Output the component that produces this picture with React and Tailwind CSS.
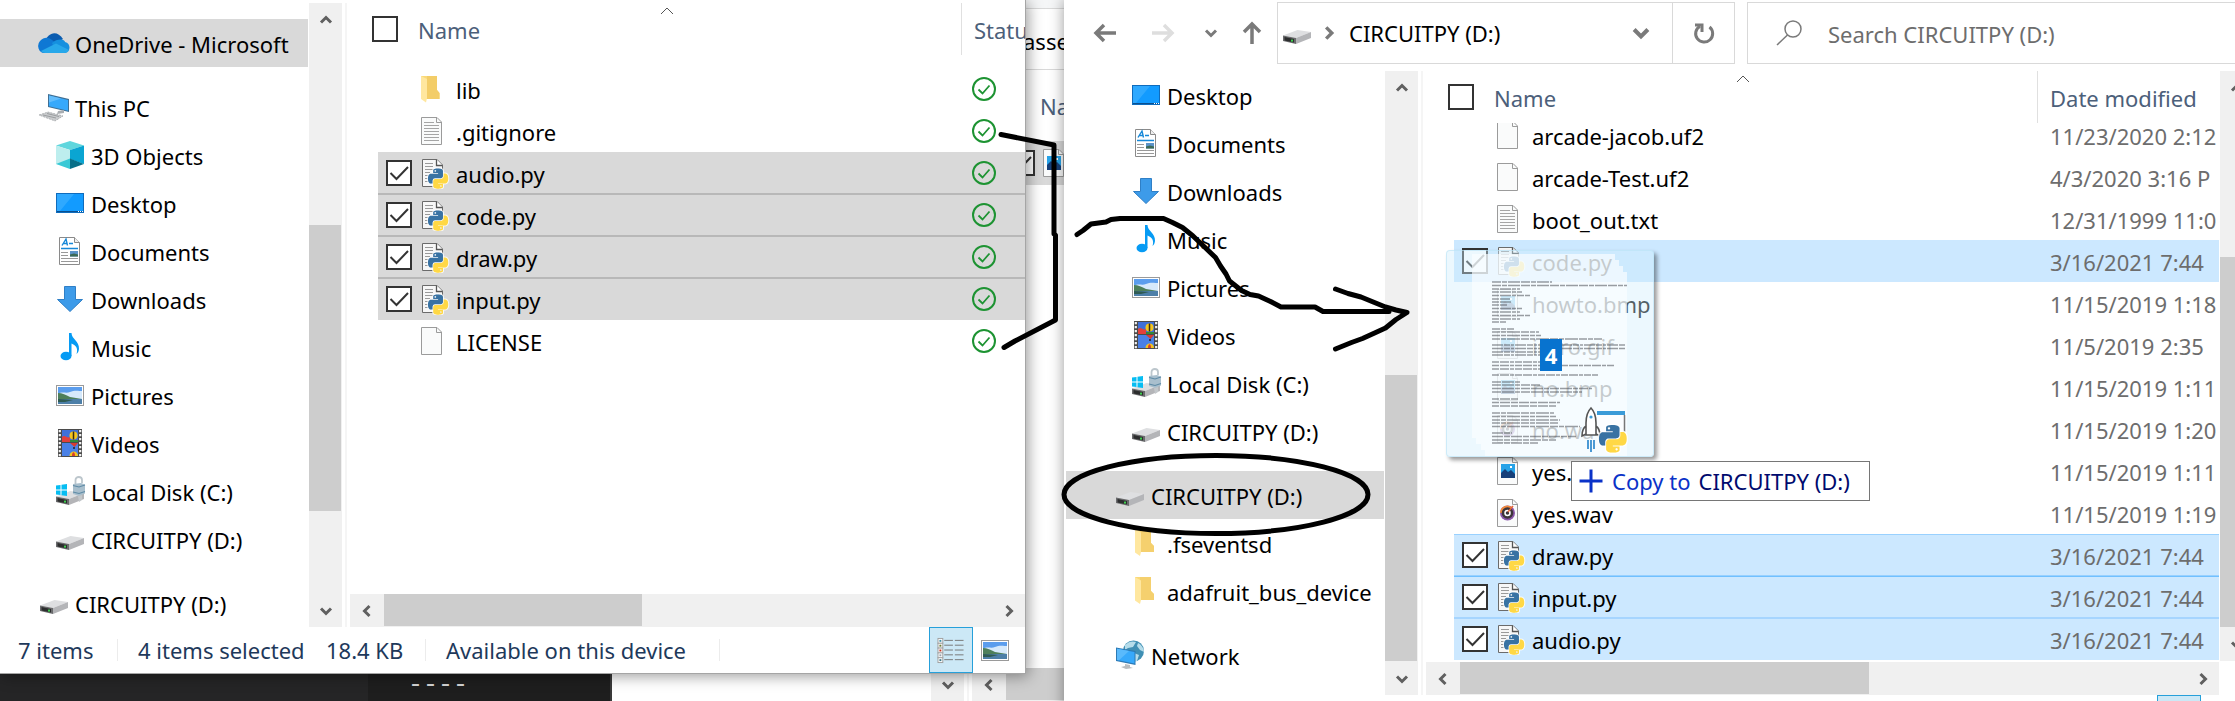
import React from "react";

/* ---------- icons ---------- */

const PY_TOP =
  "M14.25.18l.9.2.73.26.59.3.45.32.34.34.25.34.16.33.1.3.04.26.02.2-.01.13V8.5l-.05.63-.13.55-.21.46-.26.38-.3.31-.33.25-.35.19-.35.14-.33.1-.3.07-.26.04-.21.02H8.77l-.69.05-.59.14-.5.22-.41.27-.33.32-.27.35-.2.36-.15.37-.1.35-.07.32-.04.27-.02.21v3.06H3.17l-.21-.03-.28-.07-.32-.12-.35-.18-.36-.26-.36-.36-.35-.46-.32-.59-.28-.73-.21-.88-.14-1.05-.05-1.23.06-1.22.16-1.04.24-.87.32-.71.36-.57.4-.44.42-.33.42-.24.4-.16.36-.1.32-.05.24-.01h.16l.06.01h8.16v-.83H6.18l-.01-2.75-.02-.37.05-.34.11-.31.17-.28.25-.26.31-.23.38-.2.44-.18.51-.15.58-.12.64-.1.71-.06.77-.04.84-.02 1.27.05zm-6.3 1.98l-.23.33-.08.41.08.41.23.34.33.22.41.09.41-.09.33-.22.23-.34.08-.41-.08-.41-.23-.33-.33-.22-.41-.09-.41.09z";
const PY_BOTTOM =
  "M21.04 6.11l.28.06.32.12.35.18.36.27.36.35.35.47.32.59.28.73.21.88.14 1.04.05 1.23-.06 1.23-.16 1.04-.24.86-.32.71-.36.57-.4.45-.42.33-.42.24-.4.16-.36.09-.32.05-.24.02-.16-.01h-8.22v.82h5.84l.01 2.76.02.36-.05.34-.11.31-.17.29-.25.25-.31.24-.38.2-.44.17-.51.15-.58.13-.64.09-.71.07-.77.04-.84.01-1.27-.04-1.07-.14-.9-.2-.73-.25-.59-.3-.45-.33-.34-.34-.25-.34-.16-.33-.1-.3-.04-.25-.02-.2.01-.13v-5.34l.05-.64.13-.54.21-.46.26-.38.3-.32.33-.24.35-.2.35-.14.33-.1.3-.06.26-.04.21-.02.13-.01h5.84l.69-.05.59-.14.5-.21.41-.28.33-.32.27-.35.2-.36.15-.36.1-.35.07-.32.04-.28.02-.21V6.07h2.09l.14.01zm-6.47 14.25l-.23.33-.08.41.08.41.23.33.33.23.41.08.41-.08.33-.23.23-.33.08-.41-.08-.41-.23-.33-.33-.23-.41-.08-.41.08z";

function PythonMark() {
  return (
    <g>
      <path d={PY_TOP} fill="#3872a3" stroke="#fff" strokeWidth="2.4" strokeOpacity=".8" />
      <path d={PY_BOTTOM} fill="#ffd43b" stroke="#fff" strokeWidth="2.4" strokeOpacity=".8" />
      <path d={PY_TOP} fill="#3872a3" />
      <path d={PY_BOTTOM} fill="#ffd845" />
    </g>
  );
}

function Svg({ children, className = "size-8 shrink-0" }) {
  return (
    <svg viewBox="0 0 32 32" className={className} aria-hidden="true">
      {children}
    </svg>
  );
}

function Drive({ y = 0 }) {
  return (
    <g transform={`translate(0 ${y})`}>
      <path d="M2 16.5 16.5 11 30 13 15 19z" fill="#dedfe1" />
      <path d="M15 19 30 13v6L15 25z" fill="#b4b5b8" />
      <path d="M2 16.5 15 19v6L2 22z" fill="#6a6b6d" />
      <path d="M3.5 18 13 20v3.6L3.5 21.4z" fill="#2c2d2e" />
      <rect x="10" y="20.6" width="2" height="2" fill="#3fcf4f" />
    </g>
  );
}

function Landscape({ x = 2, y = 6, w = 28, h = 21 }) {
  return (
    <svg x={x} y={y} width={w} height={h} viewBox="0 0 28 21" preserveAspectRatio="none">
      <rect x=".5" y=".5" width="27" height="20" fill="#fff" stroke="#9a9a9a" />
      <rect x="2" y="2" width="24" height="17" fill="#5b9ded" />
      <path d="M2 9c4-3 8 0 12-2s9-1 12-1v8H2z" fill="#d6e9fb" />
      <path d="M2 8c4 0 8 2 12 4 4 1 8 1 12 2v1H2z" fill="#4d7f5b" />
      <path d="M2 14h24v5H2z" fill="#4d7fa8" />
      <path d="M2 14c6 0 10 1 15 1l-8 2H2z" fill="#2f5b52" />
    </svg>
  );
}

const ICONS = {
  onedrive: (
    <Svg>
      <path d="M7 15C9 6 19 2 25 12l-8 5z" fill="#0a5cb0" />
      <path d="M6 26A6 7 0 0 1 2 14c4-4 8-4 12-1l8 6-8 7z" fill="#0f78d4" />
      <path d="M14 16c5-5 13-4 13-1 6 1 6 10 0 11H18z" fill="#1590df" />
      <path d="M3 24 18 16.500 31 23c-1 2-2 3-5 3H7c-2 0-3-1-4-2z" fill="#28a8ea" />
    </Svg>
  ),
  pc: (
    <Svg>
      <path d="M10 3v13l21 5V8z" fill="#3f6f94" />
      <path d="M11 4.400v10.800l19 4.500V9z" fill="#37a9fb" />
      <path d="M11 4.400v7l12 -4z" fill="#63bdfc" />
      <path d="M20 20l6-1v3l-7 1z" fill="#a9adb1" />
      <path d="M1 24l9-3 15 4-8 5z" fill="#c9cbcd" stroke="#9a9da0" strokeWidth=".7" strokeDasharray="2 1" />
      <path d="M5 24l13 3M9 22.500l12 3" stroke="#8d9093" strokeWidth=".8" />
    </Svg>
  ),
  objects: (
    <Svg>
      <path d="M2 6.500 16 2l14 4.500L16 11z" fill="#5fd6dd" />
      <path d="M2 6.500 16 11v15.500L2 25z" fill="#bdeeee" />
      <path d="M2 25l14-5.500V30z" fill="#39c9d6" />
      <path d="M30 6.500 16 11v9l14 5z" fill="#0aa5d2" />
      <path d="M30 25l-14-5.500V30z" fill="#086f88" />
    </Svg>
  ),
  desktop: (
    <Svg>
      <rect x="2.500" y="6.500" width="27" height="19" fill="#129bff" stroke="#0f6cbd" />
      <path d="M3 7h17L6 24H3z" fill="#2fa9ff" />
      <path d="M3 24.500h26" stroke="#0a4f8f" />
      <path d="M24 24.500h5" stroke="#fff" strokeDasharray="1 1" />
    </Svg>
  ),
  documents: (
    <Svg>
      <path d="M5.500 2.500h15l5 5v22h-20z" fill="#fff" stroke="#8a8a8a" />
      <path d="M20.500 2.500v5h5" fill="#eee" stroke="#8a8a8a" />
      <path d="M8 10.500 12 4l1.500 6.500M9.500 8.500h4" fill="none" stroke="#1688d8" strokeWidth="1.400" />
      <path d="M15 8.500h4M7 13.500h17" stroke="#1688d8" strokeWidth="1.300" />
      <path d="M7 17.500h7M7 20.500h7M7 23.500h17M7 26.500h17" stroke="#999" />
      <rect x="16" y="16" width="8" height="5.500" fill="#5b93c8" />
      <path d="M16 19.500l4-1 4 1v2h-8z" fill="#3d6a55" />
    </Svg>
  ),
  downloads: (
    <Svg>
      <path d="M10.500 3.500h11v13h7L16 28.500 3.500 16.500h7z" fill="#3d9be9" stroke="#2f7fc6" />
    </Svg>
  ),
  music: (
    <Svg>
      <ellipse cx="12" cy="25" rx="5.500" ry="4.300" fill="#069bf4" />
      <path d="M15 2h2.500c0 6 8 8 7.500 16-.3 2-1 4-2.500 5 2-6-1-9-5-10.500V25H15z" fill="#069bf4" />
    </Svg>
  ),
  pictures: (
    <Svg>
      <Landscape />
    </Svg>
  ),
  videos: (
    <Svg>
      <rect x="4" y="2" width="24" height="28" fill="#4b4b4b" />
      <path d="M5.800 3v27M26.200 3v27" stroke="#f2f2f2" strokeWidth="2.200" strokeDasharray="2.200 1.800" />
      <rect x="8" y="3" width="16" height="12" fill="#3f70d8" />
      <rect x="8" y="16" width="16" height="13" fill="#4a80e6" />
      <path d="M8 10c3-3 5 2 8 0v5H8z" fill="#e2403a" />
      <path d="M16 13h8v2h-8z" fill="#2f8a3a" />
      <circle cx="19.500" cy="8.500" r="4" fill="#f4c51e" />
      <path d="M19.500 4.500v8" stroke="#3a2a10" strokeWidth="1.500" />
      <path d="M16 16h8l-3.500 4z" fill="#d83b2e" />
      <path d="M20 20v2" stroke="#222" strokeWidth="1.500" />
      <path d="M15.500 29c0-6 8.500-6 8.500 0z" fill="#f4c51e" />
      <path d="M18 29c0-5 3-5 3 0z" fill="#d83b2e" />
    </Svg>
  ),
  disk: (
    <Svg>
      <Drive y={5} />
      <path d="M2 10.500 6.500 10v4.500H2zM7.500 9.800 13 9v5.500H7.500zM2 15.500h4.500V20L2 19.500zM7.500 15.500H13V21l-5.500-.8z" fill="#06bdf2" />
      <path d="M21.500 10V5c0-4 6.500-4 6.500 0v3" fill="none" stroke="#bcc6cc" strokeWidth="1.800" />
      <path d="M19 9l8-1 4 1.500v9L25 21l-6-2z" fill="#a9bfcd" />
      <path d="M19 10.500l6 1.500 6-2M19 17l6 1.500 6-2" fill="none" stroke="#5f8ba6" strokeWidth="1.200" />
      <path d="M24 21l4-1v5l-3 2z" fill="#c3c7ca" />
    </Svg>
  ),
  drive: (
    <Svg>
      <Drive y={2} />
    </Svg>
  ),
  folder: (
    <Svg>
      <path d="M5 2h16v14l3 3v6H5z" fill="#fad978" />
      <path d="M10 2h11v14l3 3v6H10z" fill="#f5d06e" />
      <path d="M5 2l6 3.500V25l-1 4-5-3.500z" fill="#ffe79f" />
    </Svg>
  ),
  network: (
    <Svg>
      <circle cx="19.500" cy="12" r="10.500" fill="#3f8fb4" />
      <path d="M11 6c4-4 8-4 11-3l-3 5-5 1-3 2zM24 4c4 2 6 6 6 9l-4-2-3-4zM20 14l5 2-2 6h-4z" fill="#b5dcea" />
      <path d="M2 8.500 21.500 12v14L2 22z" fill="#2d7ab5" />
      <path d="M3 9.800 20.500 13v11.500L3 21z" fill="#37a9fb" />
      <path d="M3 9.800 15 12 5 21.300 3 21z" fill="#5abafc" />
      <path d="M11 25l5 1v2l3 1-7 1-5-2 4-1z" fill="#b9bdc0" />
    </Svg>
  ),
};

function Page({ stroke = "#9b9b9b", children }) {
  return (
    <Svg>
      <path d="M.500 2.500h15.500l4.500 4.500v22.500h-20z" fill="#fafbfb" stroke={stroke} />
      <path d="M15.500 2.500v5h5" fill="none" stroke={stroke} />
      {children}
    </Svg>
  );
}

const FILE_ICONS = {
  folder: (
    <Svg>
      <path d="M0 3h16v14l2.500 3v6H0z" fill="#fad978" />
      <path d="M6 3h10v14l2.500 3v6H6z" fill="#f3cd68" />
      <path d="M0 3l6 3v19l-1 4.500L0 26z" fill="#ffe79f" />
    </Svg>
  ),
  text: (
    <Page>
      <path d="M3 7.500h10M3 10.500h15M3 13.500h15M3 16.500h15M3 19.500h15M3 22.500h15M3 25.500h15" stroke="#a5a5a5" />
    </Page>
  ),
  blank: <Page />,
  image: (
    <Page>
      <rect x="4" y="9" width="14" height="14" fill="#27a3e8" />
      <path d="M4 18l4-4 3 3 3-2 4 4v4H4z" fill="#17407a" />
      <rect x="13" y="11" width="2" height="2" fill="#fff" />
    </Page>
  ),
  audio: (
    <Page>
      <circle cx="10.500" cy="16" r="7.500" fill="#8a55a8" />
      <path d="M3 16a7.500 7.500 0 0 1 12-6l-4.500 6z" fill="#f0893a" />
      <circle cx="10.500" cy="16" r="5.800" fill="#3c3438" />
      <circle cx="10.500" cy="16" r="2.500" fill="none" stroke="#fff" strokeWidth="1.500" />
      <path d="M11 15l5-6" stroke="#e8643a" strokeWidth="1.500" />
    </Page>
  ),
  python: (
    <Svg>
      <path d="M1.500 2.500h14.500l5.500 5.500v21.500h-20z" fill="#f7f7f7" stroke="#6b6b6b" />
      <path d="M15.500 2.500v6h6" fill="#fff" stroke="#555" strokeWidth="1.300" />
      <path d="M4 6.500h8M4 9.500h4M4 9.500h8M4 12.500h9M4 15.500h5M4 18.500h3M4 21.500h3M4 24.500h4" stroke="#9a9a9a" />
      <g transform="translate(7 11.500) scale(.84)">
        <PythonMark />
      </g>
    </Svg>
  ),
};

const CHEVRONS = {
  up: "M3 10.500 8 5.500l5 5",
  down: "M3 5.500l5 5 5-5",
  left: "M10.500 3l-5 5 5 5",
  right: "M5.500 3l5 5-5 5",
};

function Chevron({ dir, className }) {
  return (
    <svg viewBox="0 0 16 16" className={className} fill="none" stroke="currentColor" strokeWidth="3" aria-hidden="true">
      <path d={CHEVRONS[dir]} />
    </svg>
  );
}

/* ---------- scroll bars ---------- */

function ScrollButton({ dir }) {
  return (
    <button type="button" aria-label={`Scroll ${dir}`} className="grid size-[33px] shrink-0 place-items-center text-[#606060]">
      <Chevron dir={dir} className="size-4" />
    </button>
  );
}

function VScroll({ before, thumb, after }) {
  return (
    <div className="flex w-[33px] shrink-0 flex-col bg-[#f0f0f0]">
      <ScrollButton dir="up" />
      <div className={`basis-0 ${before}`} />
      <div className={`mr-px basis-0 bg-[#cdcdcd] ${thumb}`} />
      <div className={`basis-0 ${after}`} />
      <ScrollButton dir="down" />
    </div>
  );
}

function HScroll({ thumb, after }) {
  return (
    <div className="flex h-[33px] shrink-0 bg-[#f0f0f0]">
      <ScrollButton dir="left" />
      <div className={`ml-px mb-px basis-0 bg-[#cdcdcd] ${thumb}`} />
      <div className={`basis-0 ${after}`} />
      <ScrollButton dir="right" />
    </div>
  );
}

/* ---------- navigation pane ---------- */

function NavRow({ icon, label, indent, active }) {
  return (
    <a
      href="#"
      className={`flex h-12 items-center gap-[5px] overflow-hidden whitespace-nowrap ${indent} ${active ? "bg-[#d9d9d9]" : ""}`}
    >
      {ICONS[icon]}
      <span className="pt-px">{label}</span>
    </a>
  );
}

const LEFT_NAV = [
  [{ icon: "onedrive", label: "OneDrive - Microsoft", indent: "pl-[38px]", active: true }],
  [
    { icon: "pc", label: "This PC", indent: "pl-[38px]" },
    { icon: "objects", label: "3D Objects", indent: "pl-[54px]" },
    { icon: "desktop", label: "Desktop", indent: "pl-[54px]" },
    { icon: "documents", label: "Documents", indent: "pl-[54px]" },
    { icon: "downloads", label: "Downloads", indent: "pl-[54px]" },
    { icon: "music", label: "Music", indent: "pl-[54px]" },
    { icon: "pictures", label: "Pictures", indent: "pl-[54px]" },
    { icon: "videos", label: "Videos", indent: "pl-[54px]" },
    { icon: "disk", label: "Local Disk (C:)", indent: "pl-[54px]" },
    { icon: "drive", label: "CIRCUITPY (D:)", indent: "pl-[54px]" },
  ],
  [{ icon: "drive", label: "CIRCUITPY (D:)", indent: "pl-[38px]" }],
];

const RIGHT_NAV = [
  [
    { icon: "desktop", label: "Desktop", indent: "pl-16" },
    { icon: "documents", label: "Documents", indent: "pl-16" },
    { icon: "downloads", label: "Downloads", indent: "pl-16" },
    { icon: "music", label: "Music", indent: "pl-16" },
    { icon: "pictures", label: "Pictures", indent: "pl-16" },
    { icon: "videos", label: "Videos", indent: "pl-16" },
    { icon: "disk", label: "Local Disk (C:)", indent: "pl-16" },
    { icon: "drive", label: "CIRCUITPY (D:)", indent: "pl-16" },
  ],
  [
    { icon: "drive", label: "CIRCUITPY (D:)", indent: "pl-12", active: true },
    { icon: "folder", label: ".fseventsd", indent: "pl-16" },
    { icon: "folder", label: "adafruit_bus_device", indent: "pl-16" },
  ],
  [{ icon: "network", label: "Network", indent: "pl-12" }],
];

function NavPane({ groups, className }) {
  return (
    <nav className={`flex shrink-0 flex-col gap-4 overflow-hidden ${className}`}>
      {groups.map((rows, i) => (
        <div key={i}>
          {rows.map((row, j) => (
            <NavRow key={j} {...row} />
          ))}
        </div>
      ))}
    </nav>
  );
}

/* ---------- file list ---------- */

function Checkbox({ label, checked = false }) {
  return (
    <span className="grid size-[26px] shrink-0">
      <input
        type="checkbox"
        aria-label={label}
        defaultChecked={checked}
        className="peer col-start-1 row-start-1 size-[26px] appearance-none border-2 border-[#333] bg-white"
      />
      <svg
        viewBox="0 0 26 26"
        className="pointer-events-none invisible col-start-1 row-start-1 size-[26px] peer-checked:visible"
        fill="none"
        stroke="#333"
        strokeWidth="2"
        aria-hidden="true"
      >
        <path d="M4.500 13l6 6L22 7" />
      </svg>
    </span>
  );
}

function Synced() {
  return (
    <svg viewBox="0 0 24 24" className="size-6 shrink-0" fill="none" stroke="#1d9332" role="img" aria-label="Available on this device">
      <circle cx="12" cy="12" r="11" strokeWidth="2" />
      <path d="M6.500 12.500l4 4 7-8" strokeWidth="1.800" />
    </svg>
  );
}

function FileTable({ column, columnPad, headClass, files }) {
  return (
    <table className="w-full table-fixed border-collapse text-left">
      <colgroup>
        <col className="w-[612px]" />
        <col />
      </colgroup>
      <thead>
        <tr className="text-[#4c607a]">
          <th className={`p-0 align-top font-normal ${headClass}`}>
            <div className="flex h-[52px] items-center border-r border-[#e0e0e0] pl-[22px]">
              <Checkbox label="Select all" />
              <span className="w-[262px] pt-px pl-5">Name</span>
              <svg viewBox="0 0 14 8" className="mb-9 h-2 w-[14px]" fill="none" stroke="#555" aria-hidden="true">
                <path d="M1 7l6-6 6 6" />
              </svg>
            </div>
          </th>
          <th className="overflow-hidden p-0 align-top font-normal whitespace-nowrap">
            <div className="flex h-[52px] items-center pt-px pl-3">{column}</div>
          </th>
        </tr>
      </thead>
      <tbody>
        {files.map((f) => (
          <tr key={f.name}>
            <td className="p-0 pl-7">
              <div className={f.clipped ? "flex h-[33px] items-end overflow-hidden" : ""}>
                <div className={`flex h-[42px] items-center border-y pl-2 ${f.tone || "border-transparent"}`}>
                  {f.checked ? <Checkbox label={f.name} checked /> : <span className="w-[26px]" />}
                  <span className="flex items-center gap-[3px] pl-[9px] whitespace-nowrap">
                    {FILE_ICONS[f.icon]}
                    <span className="pt-[2px]">{f.name}</span>
                  </span>
                </div>
              </div>
            </td>
            <td className="overflow-hidden p-0 whitespace-nowrap text-[#6d6d6d]">
              <div className={f.clipped ? "flex h-[33px] items-end overflow-hidden" : ""}>
                <div className={`flex h-[42px] items-center border-y ${columnPad} ${f.tone || "border-transparent"}`}>
                  {f.date ? <span className="pt-[2px]">{f.date}</span> : <Synced />}
                </div>
              </div>
            </td>
          </tr>
        ))}
      </tbody>
    </table>
  );
}

const GREY_FIRST = "bg-[#d9d9d9] border-t-transparent border-b-[#b8b8b8]";
const GREY = "bg-[#d9d9d9] border-[#b8b8b8]";
const GREY_LAST = "bg-[#d9d9d9] border-t-[#b8b8b8] border-b-transparent";
const BLUE = "bg-[#cce8ff] border-transparent";
const BLUE_FIRST = "bg-[#cce8ff] border-t-[#99d1ff] border-b-[#99d1ff]";
const BLUE_MID = "bg-[#cce8ff] border-t-[#70c0ff] border-b-[#a6d5ff]";
const BLUE_LAST = "bg-[#cce8ff] border-t-[#a6d5ff] border-b-transparent";

const LEFT_FILES = [
  { name: "lib", icon: "folder" },
  { name: ".gitignore", icon: "text" },
  { name: "audio.py", icon: "python", checked: true, tone: GREY_FIRST },
  { name: "code.py", icon: "python", checked: true, tone: GREY },
  { name: "draw.py", icon: "python", checked: true, tone: GREY },
  { name: "input.py", icon: "python", checked: true, tone: GREY_LAST },
  { name: "LICENSE", icon: "blank" },
];

const RIGHT_FILES = [
  { name: "arcade-jacob.uf2", icon: "blank", date: "11/23/2020 2:12", clipped: true },
  { name: "arcade-Test.uf2", icon: "blank", date: "4/3/2020 3:16 P" },
  { name: "boot_out.txt", icon: "text", date: "12/31/1999 11:0" },
  { name: "code.py", icon: "python", date: "3/16/2021 7:44", checked: true, tone: BLUE },
  { name: "howto.bmp", icon: "image", date: "11/15/2019 1:18" },
  { name: "intro.gif", icon: "image", date: "11/5/2019 2:35" },
  { name: "no.bmp", icon: "image", date: "11/15/2019 1:11" },
  { name: "no.wav", icon: "audio", date: "11/15/2019 1:20" },
  { name: "yes.bmp", icon: "image", date: "11/15/2019 1:11" },
  { name: "yes.wav", icon: "audio", date: "11/15/2019 1:19" },
  { name: "draw.py", icon: "python", date: "3/16/2021 7:44", checked: true, tone: BLUE_FIRST },
  { name: "input.py", icon: "python", date: "3/16/2021 7:44", checked: true, tone: BLUE_MID },
  { name: "audio.py", icon: "python", date: "3/16/2021 7:44", checked: true, tone: BLUE_LAST },
];

function ViewButtons() {
  return (
    <div className="ml-auto flex h-[46px] pr-2">
      <button type="button" aria-label="Details view" className="grid w-11 place-items-center border border-[#26a0da] bg-[#cce8f6]">
        <svg viewBox="0 0 28 28" className="size-7 pt-px" aria-hidden="true">
          {[0, 1, 2, 3, 4].map((i) => (
            <g key={i} transform={`translate(0 ${1 + i * 5})`}>
              <rect x=".500" y=".500" width="5" height="5" fill="#fff" stroke="#a0a0a0" />
              <rect x="2" y="2" width="2" height="2" fill={["#3f8fa8", "#6b7a34", "#c8301f", "#9aa3ad", "#3f7a8a"][i]} />
              <path d="M7 2.500h9M18 2.500h9" stroke="#777" />
            </g>
          ))}
        </svg>
      </button>
      <button type="button" aria-label="Large icons view" className="grid w-11 place-items-center">
        <Svg>
          <Landscape />
        </Svg>
      </button>
    </div>
  );
}

/* ---------- windows ---------- */

function SourceWindow() {
  return (
    <section className="absolute top-0 bottom-[27px] left-0 flex w-[1026px] flex-col border-r border-b border-[#a5a5a5] bg-white shadow-[2px_2px_14px_rgba(0,0,0,0.4)]">
      <div className="flex min-h-0 flex-1 pt-[3px]">
        <NavPane groups={LEFT_NAV} className="w-[308px] pt-4" />
        <div className="flex pl-px">
          <VScroll before="grow-[189]" thumb="grow-[286]" after="grow-[83]" />
        </div>
        <div className="ml-[3px] w-[2px] bg-[#f5f5f5]" />
        <div className="ml-[3px] flex min-w-0 flex-1 flex-col">
          <div className="min-h-0 flex-1 overflow-hidden">
            <FileTable column="Statu" columnPad="pl-[10px]" headClass="h-[65px]" files={LEFT_FILES} />
          </div>
          <HScroll thumb="grow-[258]" after="grow-[350]" />
        </div>
      </div>
      <footer className="flex h-[46px] shrink-0 items-center pl-[18px] whitespace-nowrap text-[#1e395b]">
        <span className="w-[99px]">7 items</span>
        <span className="mr-5 h-[22px] w-px bg-[#ececec]" />
        <span className="w-[188px]">4 items selected</span>
        <span className="w-[99px]">18.4 KB</span>
        <span className="mr-5 h-[22px] w-px bg-[#ececec]" />
        <span className="w-[273px]">Available on this device</span>
        <span className="h-[22px] w-px bg-[#ececec]" />
        <ViewButtons />
      </footer>
    </section>
  );
}

function Toolbar() {
  return (
    <header className="flex h-[71px] shrink-0 pt-[2px] pb-[7px] text-[#7a7a7a]">
      <div className="flex w-[213px] shrink-0 items-center pl-[29px]">
        <button type="button" aria-label="Back" className="w-6">
          <svg viewBox="0 0 24 20" className="h-5 w-6" fill="none" stroke="currentColor" strokeWidth="3.500" aria-hidden="true">
            <path d="M23 10H3M11 2l-8 8 8 8" />
          </svg>
        </button>
        <button type="button" aria-label="Forward" className="ml-[34px] w-6 text-[#dedede]">
          <svg viewBox="0 0 24 20" className="h-5 w-6" fill="none" stroke="currentColor" strokeWidth="3.500" aria-hidden="true">
            <path d="M1 10h20M13 2l8 8-8 8" />
          </svg>
        </button>
        <button type="button" aria-label="Recent locations" className="ml-[28px] w-4">
          <Chevron dir="down" className="size-4" />
        </button>
        <button type="button" aria-label="Up" className="ml-[23px] w-5">
          <svg viewBox="0 0 20 24" className="h-6 w-5" fill="none" stroke="currentColor" strokeWidth="3.500" aria-hidden="true">
            <path d="M10 23V3M2 11l8-8 8 8" />
          </svg>
        </button>
      </div>
      <div className="flex w-[458px] shrink-0 items-center border border-[#d9d9d9] pl-[3px] text-black">
        {ICONS.drive}
        <Chevron dir="right" className="ml-[7px] size-[18px] text-[#7a7a7a]" />
        <a href="#" className="ml-[11px] whitespace-nowrap">
          CIRCUITPY (D:)
        </a>
        <button type="button" aria-label="Previous locations" className="mr-5 ml-auto text-[#7a7a7a]">
          <Chevron dir="down" className="size-[22px]" />
        </button>
        <button type="button" aria-label="Refresh" className="grid w-[62px] place-items-center self-stretch border-l border-[#d9d9d9] text-[#7a7a7a]">
          <svg viewBox="0 0 24 24" className="size-6" fill="none" stroke="currentColor" strokeWidth="3" aria-hidden="true">
            <path d="M17.500 6a8.500 8.500 0 1 1-9.500-.800" />
            <path d="M3 4h7v7" />
          </svg>
        </button>
      </div>
      <label className="ml-3 flex min-w-0 flex-1 items-center border border-[#d9d9d9] pl-7">
        <svg viewBox="0 0 26 26" className="size-[26px] shrink-0" fill="none" stroke="#7a7a7a" strokeWidth="1.500" aria-hidden="true">
          <circle cx="17" cy="9" r="8" />
          <path d="M11.500 15 1 25" />
        </svg>
        <span className="sr-only">Search</span>
        <input
          type="search"
          placeholder="Search CIRCUITPY (D:)"
          className="ml-[26px] min-w-0 flex-1 bg-transparent pt-[2px] outline-none placeholder:text-[#6d6d6d]"
        />
      </label>
    </header>
  );
}

function TargetWindow() {
  return (
    <section className="absolute top-0 -right-[18px] -bottom-10 left-[1064px] flex flex-col bg-white shadow-[0_0_14px_rgba(0,0,0,0.4)]">
      <Toolbar />
      <div className="flex min-h-0 flex-1 pl-[2px]">
        <NavPane groups={RIGHT_NAV} className="w-[318px]" />
        <div className="flex pl-px">
          <VScroll before="grow-[271]" thumb="grow-[286]" after="grow-[1]" />
        </div>
        <div className="ml-[3px] w-[2px] bg-[#f5f5f5]" />
        <div className="ml-[3px] flex min-w-0 flex-1 flex-col">
          <div className="flex min-h-0 flex-1 gap-px">
            <div className="min-w-0 flex-1 overflow-hidden">
              <FileTable column="Date modified" columnPad="pl-3" headClass="h-[52px]" files={RIGHT_FILES} />
            </div>
            <VScroll before="grow-[153]" thumb="grow-[370]" after="grow-[1]" />
          </div>
          <div className="mt-px mr-[34px]">
            <HScroll thumb="grow-[409]" after="grow-[317]" />
          </div>
        </div>
      </div>
      <footer className="flex h-[46px] shrink-0">
        <ViewButtons />
      </footer>
    </section>
  );
}

function BackgroundWindow() {
  return (
    <section className="absolute inset-y-0 left-[612px] flex w-[460px] flex-col overflow-hidden bg-white">
      <div className="flex min-h-0 flex-1 flex-col pl-[409px] whitespace-nowrap">
        <div className="h-[9px] border-b border-[#d9d9d9] bg-[#f5f6f7]" />
        <div className="flex h-[61px] items-center border-b border-[#d9d9d9] pt-1 pl-[2px]">asse</div>
        <div className="flex h-[71px] items-center pl-[19px] text-[#4c607a]">Na</div>
        <div className="flex h-11 items-center gap-2 overflow-hidden bg-[#d9d9d9] pl-0">
          <span className="-ml-3">
            <Checkbox label="Image file" checked />
          </span>
          {FILE_ICONS.image}
        </div>
      </div>
      <div className="flex shrink-0 items-end pl-[319px]">
        <div className="shrink-0 bg-[#f0f0f0]">
          <ScrollButton dir="down" />
        </div>
        <div className="ml-[3px] h-[33px] w-[2px] shrink-0 bg-[#f5f5f5]" />
        <div className="ml-[3px] flex shrink-0 bg-[#f0f0f0]">
          <ScrollButton dir="left" />
          <div className="mb-px ml-px w-[200px] bg-[#cdcdcd]" />
        </div>
      </div>
    </section>
  );
}

function Editor() {
  return (
    <div className="absolute bottom-0 left-0 flex h-[31px] w-[612px] border-r-2 border-[#3a3a3a] bg-[#1e1e1e]">
      <div className="w-[368px] bg-[#252526]" />
      <code className="pt-1 pl-[40px] font-['Liberation_Mono',monospace] text-[25px] leading-6 text-[#d4d4d4]">----</code>
    </div>
  );
}

/* ---------- drag preview ---------- */

function DragPreview() {
  return (
    <div className="absolute top-[250px] left-[1446px] h-[207px] w-[208px] rounded-[4px] border border-[#b9e2f6]/60 bg-[#d0eefd]/40 shadow-[3px_3px_4px_rgba(0,0,0,0.4)]">
      <svg viewBox="0 0 206 205" className="h-full w-full" aria-hidden="true">
        <path d="M25 3h143v6h4v6h4v6h4v184H38v-6h-4v-6h-5v-6h-4z" fill="#fbfdff" fillOpacity=".68" />
        <g stroke="#4a4f55" strokeWidth="1.300" strokeOpacity=".55">
          <path d="M45 31h60M45 34.500h135" strokeDasharray="9 1 5 1 12 1" />
          <path d="M45 38h28M45 41h30M45 44.500h38M45 48h18M45 51h20M45 54h15M45 57.500h30M45 61h28M45 64.500h38M45 68h28M45 71h14" strokeDasharray="7 1 11 1 4 1" />
          <path d="M45 78h22M45 81h47M45 84.500h49M45 88h110" strokeDasharray="8 1 5 1 13 1" />
          <path d="M45 94h134M45 97.500h134M45 101h60M45 104h50" strokeDasharray="11 1 6 1 3 1" />
          <path d="M45 111h50M45 114.500h122M45 118h64M45 124h106" strokeDasharray="7 1 9 1 4 1" />
          <path d="M45 131h28M45 134h48M45 137.500h100M45 141h90" strokeDasharray="9 1 12 1 5 1" />
          <path d="M45 148h26M45 151.500h68M45 155h64" strokeDasharray="7 1 10 1" />
          <path d="M45 162h62M45 165.500h64M45 169h68M45 172h66M45 175.500h88" strokeDasharray="8 1 5 1 13 1" />
          <path d="M45 182h20M45 185.500h84M45 189h64M45 192h46" strokeDasharray="11 1 6 1" />
        </g>
        <path d="M150 161h28v20h-28z" fill="#fbfdff" />
        <path d="M150 160h28v4h-28z" fill="#3a9bd8" />
        <path d="M177.500 164v17" stroke="#777" strokeWidth="1.500" />
        <path
          d="M139 184v-12c0-7 2-12 5-15 3 3 5 8 5 15v12zM139 175c-3 2-4 5-4 10l4-2M149 175c3 2 4 5 4 10l-4-2"
          fill="#fff"
          stroke="#555"
          strokeWidth="1.600"
        />
        <circle cx="144" cy="166" r="1.600" fill="#3a9bd8" />
        <path d="M141 189v9M144 189v12M147 189v9" stroke="#3a8fd0" strokeWidth="1.800" />
        <g transform="translate(152 174) scale(1.150)">
          <PythonMark />
        </g>
      </svg>
      <span className="absolute top-[88px] left-[93px] grid h-8 w-[22px] place-items-center bg-[#0873cf] font-bold text-white">4</span>
    </div>
  );
}

function DropHint() {
  return (
    <div
      role="tooltip"
      className="absolute top-[461px] left-[1571px] flex h-10 w-[299px] items-center gap-[9px] border border-[#767676] bg-white pl-[7px] whitespace-nowrap text-[#000a6e]"
    >
      <svg viewBox="0 0 24 24" className="size-6 shrink-0" stroke="#0a32c8" strokeWidth="3" aria-hidden="true">
        <path d="M12 .500v23M.500 12h23" />
      </svg>
      <span className="flex gap-2">
        <span className="text-[#0a32c8]">Copy to</span>
        <span>CIRCUITPY (D:)</span>
      </span>
    </div>
  );
}

/* Hand-drawn pen strokes laid over the desktop. */
function PenStrokes() {
  return (
    <svg
      className="pointer-events-none absolute inset-0 h-full w-full"
      fill="none"
      stroke="#000"
      strokeWidth="5"
      strokeLinecap="round"
      strokeLinejoin="round"
      aria-hidden="true"
    >
      <path d="M1001 134.500 1054 145V234l1.500 1V320L1015 341l-11 6.500" />
      <path d="M1077 234.500l6-4 8-6.500 15-2 5-2.500 9-1h43.500l9 4 10 5 10.500 8.500 10.500 10 12 11.500 5 8.500 5.500 8 3.500 7 12 9.500 8.500 4 8.500 1.500 12 5.500 10.500 5.500H1315l8 4.500h66" />
      <path d="M1335.500 289l12.500 4.500 13 3.500 11 4.500 13.500 5.500 10.500 3 11 2.500-11 7-10.500 8.500-12 5.500-11 5-11 4-16 6.500" />
      <ellipse cx="1216" cy="494.500" rx="152" ry="39" />
    </svg>
  );
}

export default function App() {
  return (
    <main className="relative h-screen w-full overflow-hidden bg-white font-['Noto_Sans','Open_Sans',sans-serif] text-[22px] leading-[30px] text-black">
      <BackgroundWindow />
      <Editor />
      <SourceWindow />
      <TargetWindow />
      <DragPreview />
      <DropHint />
      <PenStrokes />
    </main>
  );
}
